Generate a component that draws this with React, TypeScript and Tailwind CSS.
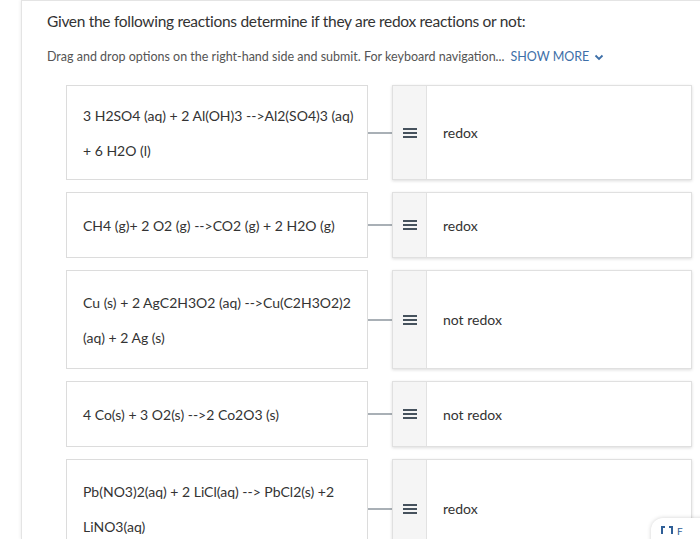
import React from "react";

const ROWS = [
  { lines: ["3 H2SO4 (aq) + 2 Al(OH)3 -->Al2(SO4)3 (aq)", "+ 6 H2O (l)"], answer: "redox", h: "h-[95px]" },
  { lines: ["CH4 (g)+ 2 O2 (g) -->CO2 (g) + 2 H2O (g)"], answer: "redox", h: "h-[66px]" },
  { lines: ["Cu (s) + 2 AgC2H3O2 (aq) -->Cu(C2H3O2)2", "(aq) + 2 Ag (s)"], answer: "not redox", h: "h-[99px]" },
  { lines: ["4 Co(s) + 3 O2(s) -->2 Co2O3 (s)"], answer: "not redox", h: "h-[66px]" },
  { lines: ["Pb(NO3)2(aq) + 2 LiCl(aq) --> PbCl2(s) +2", "LiNO3(aq)"], answer: "redox", h: "h-[99px]" },
];

function Handle() {
  return (
    <svg width="14" height="12" viewBox="0 0 14 12" className="text-[#46525d]">
      <rect x="0" y="1" width="14" height="2" fill="currentColor" />
      <rect x="0" y="5" width="14" height="2" fill="currentColor" />
      <rect x="0" y="9" width="14" height="2" fill="currentColor" />
    </svg>
  );
}

export default function App() {
  return (
    <div className="relative h-[539px] w-[700px] overflow-hidden bg-white font-['Lato',sans-serif] text-[#333]">
      <div className="ml-[21px] h-full border-l border-t border-[#e4e4e4] pl-[25px] pt-[9px] shadow-[-1px_0_3px_rgba(0,0,0,0.06)]">
        <h1 className="text-[15.5px] leading-[22px] tracking-[-0.3px] text-[#333]">
          Given the following reactions determine if they are redox reactions or not:
        </h1>
        <p className="mt-[16px] flex items-center text-[12.5px] leading-[18px] text-[#555]">
          Drag and drop options on the right-hand side and submit. For keyboard navigation...
          <span className="ml-[6px] text-[#3d6fa8]">SHOW MORE</span>
          <svg width="12" height="12" viewBox="0 0 12 12" className="ml-[4px] text-[#3d6fa8]">
            <path d="M2.5 4.5 L6 8 L9.5 4.5" fill="none" stroke="currentColor" strokeWidth="1.8" />
          </svg>
        </p>

        <div className="ml-[19px] mt-[19px] flex flex-col gap-[12px]">
          {ROWS.map((r, i) => (
            <div key={i} className={`flex shrink-0 ${r.h}`}>
              <div className="flex w-[302px] flex-col justify-center border border-[#dcdcdc] bg-white pl-[16px] text-[14px] leading-[35px] text-[#333]">
                {r.lines.map((l, j) => (
                  <div key={j}>{l}</div>
                ))}
              </div>
              <div className="flex w-[24px] items-center">
                <div className="h-[2px] w-full bg-[#a9b0b6]" />
              </div>
              <div className="flex w-[300px] border border-[#e0e0e0] bg-white shadow-[0_1px_3px_rgba(0,0,0,0.14)]">
                <div className="flex w-[34px] items-center justify-center border-r border-[#e2e2e2] bg-[#f5f5f5]">
                  <Handle />
                </div>
                <div className="flex items-center pl-[16px] text-[14px] text-[#333]">{r.answer}</div>
              </div>
            </div>
          ))}
        </div>
      </div>

      <div className="absolute left-[651px] top-[518px] flex h-[40px] w-[80px] items-start gap-[4px] rounded-tl-[12px] bg-white pl-[10px] pt-[8px] shadow-[0_0_4px_rgba(0,0,0,0.18)]">
        <svg width="12" height="9" viewBox="0 0 12 9" className="text-[#2f5f97]">
          <path d="M1 8 V1 H4 M8 1 H11 V8" fill="none" stroke="currentColor" strokeWidth="2" />
        </svg>
        <span className="text-[10px] leading-[10px] text-[#2f5f97]">F</span>
      </div>
    </div>
  );
}
